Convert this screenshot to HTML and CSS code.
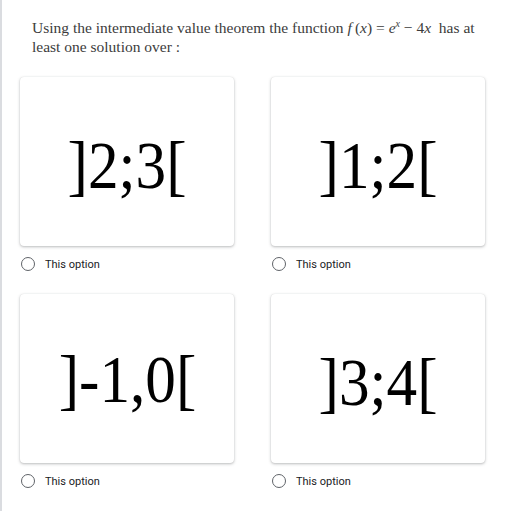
FILE: index.html
```html
<!DOCTYPE html>
<html>
<head>
<meta charset="utf-8">
<link rel="stylesheet" href="styles.css">
</head>
<body>
<div class="page">
  <p class="question">Using the intermediate value theorem the function <span class="math"><i>f</i>&#8201;(<i>x</i>) = <i>e</i><sup><i>x</i></sup> &minus; 4<i>x</i></span>&nbsp; has at<br>least one solution over :</p>
  <div class="options">
    <div class="option">
      <div class="card"><span class="big">]2;3[</span></div>
      <label class="choice"><span class="radio"></span><span class="label">This option</span></label>
    </div>
    <div class="option">
      <div class="card"><span class="big">]1;2[</span></div>
      <label class="choice"><span class="radio"></span><span class="label">This option</span></label>
    </div>
    <div class="option">
      <div class="card"><span class="big wide">]-1,0[</span></div>
      <label class="choice"><span class="radio"></span><span class="label">This option</span></label>
    </div>
    <div class="option">
      <div class="card"><span class="big">]3;4[</span></div>
      <label class="choice"><span class="radio"></span><span class="label">This option</span></label>
    </div>
  </div>
</div>
</body>
</html>
```
FILE: styles.css
```css
html, body {
  margin: 0;
  padding: 0;
  background: #ffffff;
}
.page {
  width: 509px;
  height: 511px;
  box-sizing: border-box;
  border-left: 2px solid #dadce0;
  padding: 18px 0 0 0;
}
.question {
  margin: 0;
  padding-left: 30px;
  font-family: "Liberation Serif", "Times New Roman", serif;
  font-size: 15.5px;
  line-height: 19px;
  color: #3c3c3c;
}
.question sup {
  font-size: 10px;
  line-height: 0;
  vertical-align: 6px;
}
.options {
  display: grid;
  grid-template-columns: 214px 214px;
  column-gap: 37px;
  row-gap: 20px;
  padding-left: 18px;
  margin-top: 21px;
}
.card {
  height: 169px;
  background: #ffffff;
  border-radius: 4px;
  box-shadow: 0 1px 3px rgba(60, 64, 67, 0.35), 0 0 1px rgba(60, 64, 67, 0.15);
  display: flex;
  align-items: center;
  justify-content: center;
}
.big {
  display: inline-block;
  font-family: "Liberation Serif", "Times New Roman", serif;
  font-size: 68px;
  line-height: 1;
  color: #000000;
  transform: scaleX(0.9);
  padding-top: 6px;
}
.big.wide {
  padding-top: 0;
}
.choice {
  display: flex;
  align-items: center;
  height: 20px;
  margin-top: 8px;
}
.radio {
  width: 12px;
  height: 12px;
  border: 1.5px solid #5f6368;
  border-radius: 50%;
  margin-left: 1px;
}
.label {
  margin-left: 10px;
  font-family: Roboto, "Liberation Sans", sans-serif;
  font-size: 11px;
  color: #202124;
}
```
